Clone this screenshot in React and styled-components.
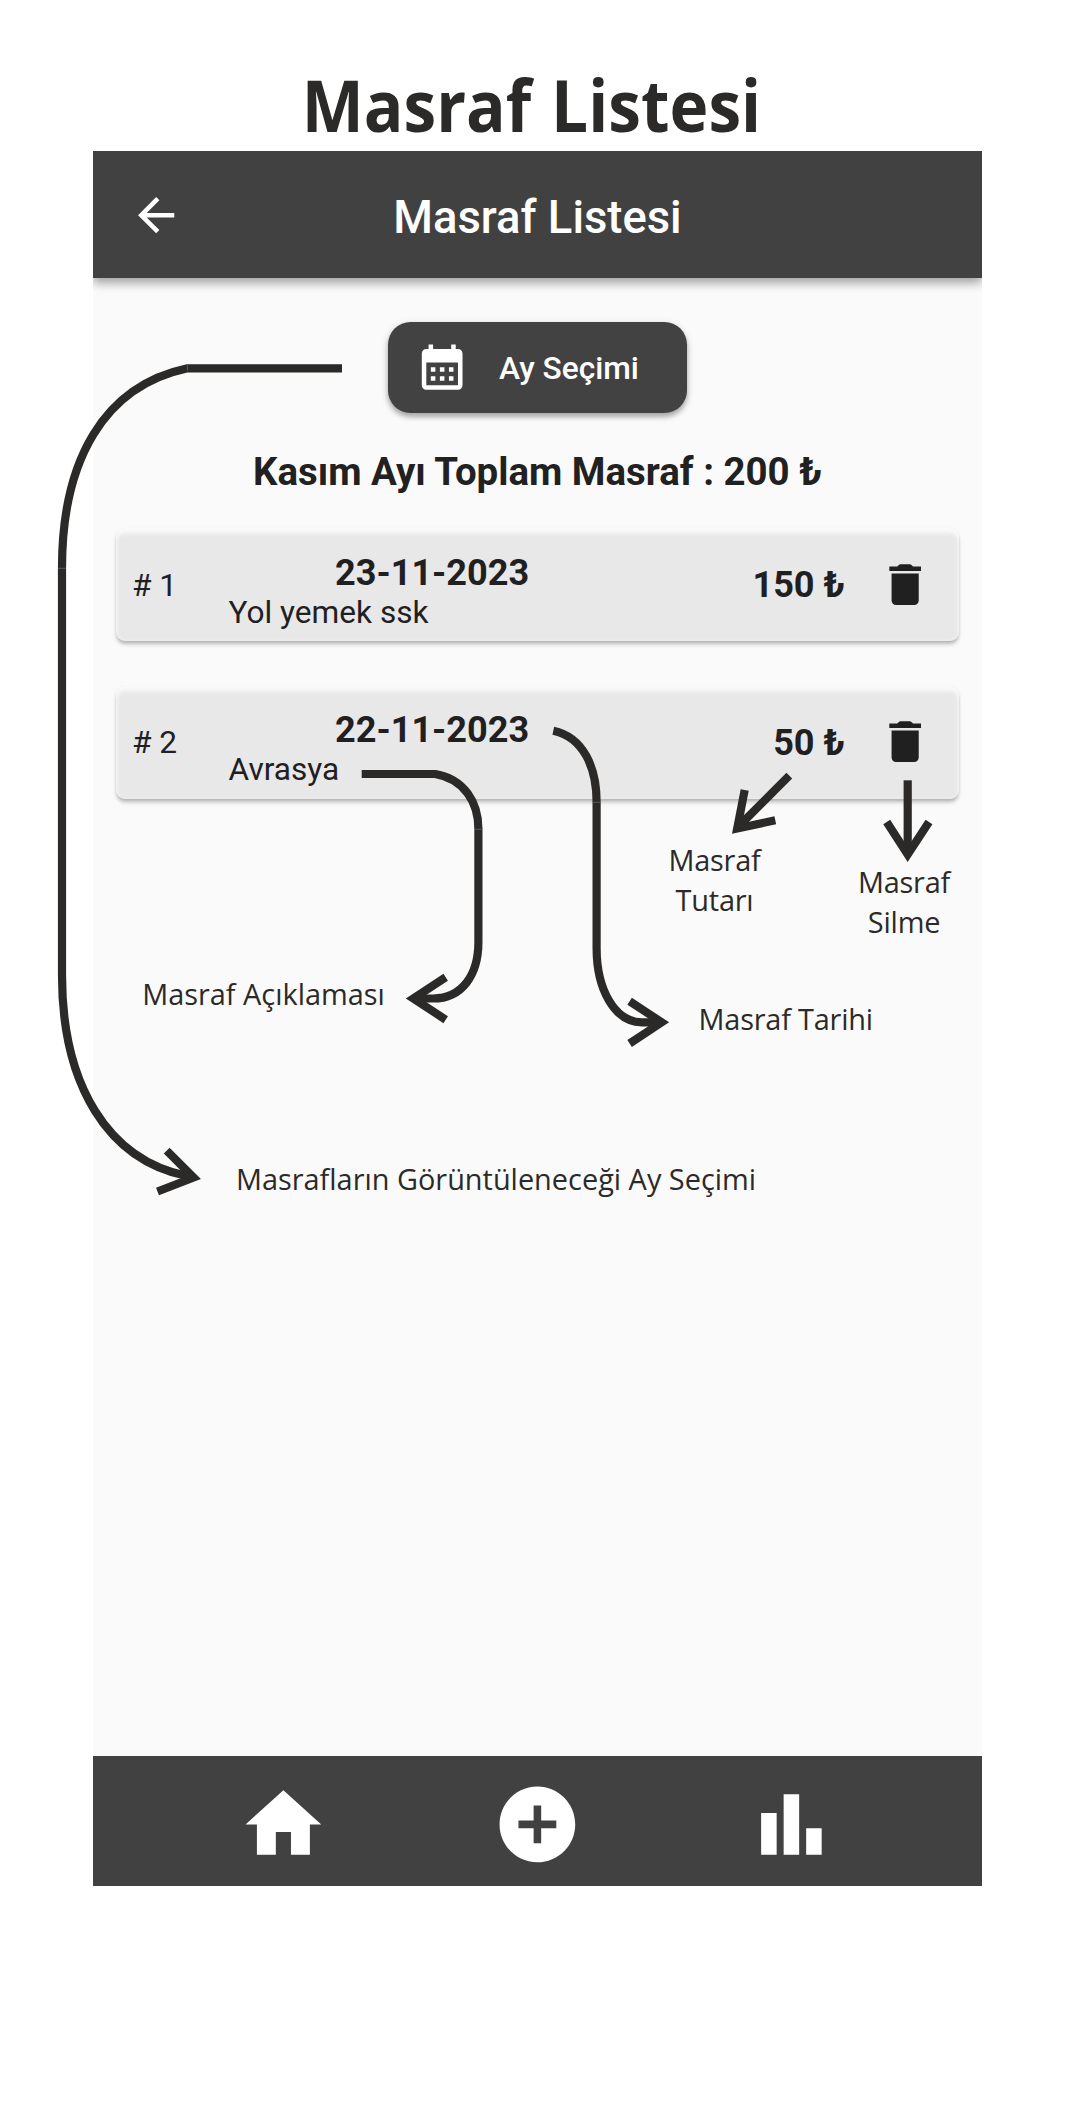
import React from "react";
import styled, { createGlobalStyle } from "styled-components";

const GlobalStyle = createGlobalStyle`
  *, *::before, *::after { box-sizing: border-box; }
  body { margin: 0; background: #fff; }
`;

const Page = styled.main`
  position: relative;
  width: 1081px;
  height: 2104px;
  padding: 57px 99px 0 93px;
  overflow: hidden;
  background: #fff;
  font-family: Roboto, "Liberation Sans", sans-serif;
`;

const PageTitle = styled.h1`
  width: 877px;
  margin: 0;
  height: 94px;
  line-height: 96px;
  text-align: center;
  white-space: nowrap;
  font-family: "Open Sans", "Noto Sans", sans-serif;
  font-weight: 700;
  font-size: 71px;
  word-spacing: 3px;
  color: #2b2a29;
  transform: scaleX(0.926);
`;

const Phone = styled.section`
  display: flex;
  flex-direction: column;
  height: 1734.7px;
  background: #fafafa;
`;

const AppBar = styled.header`
  display: grid;
  grid-template-columns: 127px 1fr 127px;
  align-items: center;
  flex: none;
  height: 127.4px;
  background: #414141;
  color: #fff;
  box-shadow: 0 5px 9px rgba(0, 0, 0, 0.3), 0 2px 14px rgba(0, 0, 0, 0.1);
  clip-path: inset(0 0 -30px 0);
`;

const BackButton = styled.button`
  display: grid;
  place-items: center;
  height: 100%;
  padding: 0;
  border: 0;
  background: none;
  color: inherit;
`;

const BarTitle = styled.h2`
  margin: 0;
  padding-top: 6px;
  text-align: center;
  font-weight: 500;
  font-size: 45.4px;
  line-height: 54px;
`;

const Body = styled.div`
  display: flex;
  flex-direction: column;
  align-items: center;
  flex: 1;
  padding: 44px 22.6px 0;
`;

const MonthButton = styled.button`
  display: flex;
  align-items: center;
  gap: 29.5px;
  flex: none;
  width: 298.4px;
  height: 90.4px;
  padding: 0 0 0 26.9px;
  border: 0;
  border-radius: 22.6px;
  background: #424242;
  color: #fff;
  font: 500 31.67px Roboto, sans-serif;
  box-shadow: 0 4px 5px rgba(0, 0, 0, 0.26), 0 2px 8px rgba(0, 0, 0, 0.14);
`;

const ButtonLabel = styled.span`
  padding-top: 1.6px;
`;

const Total = styled.p`
  margin: 36.5px 0 33px;
  font-weight: 700;
  font-size: 38.45px;
  line-height: 46px;
  color: #212121;
  white-space: nowrap;
`;

const ExpenseList = styled.ul`
  display: flex;
  flex-direction: column;
  gap: 45px;
  align-self: stretch;
  margin: 0;
  padding: 0;
  list-style: none;
`;

const ExpenseCard = styled.li`
  display: grid;
  grid-template-columns: 96.7px 406px 1fr 54.3px;
  align-items: center;
  height: 112.8px;
  padding: 0 27.2px 0 16.3px;
  border-radius: 9px;
  background: #e8e8e8;
  color: #1f201f;
  box-shadow:
    inset 0 6px 4px -1px #fafafa,
    inset 2px 0 4px -2px #f6f6f6,
    inset -2px 0 4px -2px #f6f6f6,
    0 4px 4px -1px rgba(0, 0, 0, 0.26),
    0 1px 3px rgba(0, 0, 0, 0.08);
`;

const Index = styled.span`
  padding-top: 2px;
  font-size: 31.67px;
  line-height: 38px;
`;

const Details = styled.div`
  display: flex;
  flex-direction: column;
  padding-top: 14px;
`;

const DateText = styled.strong`
  padding-left: 1px;
  text-align: center;
  font-weight: 700;
  font-size: 36.1px;
  line-height: 42px;
`;

const Description = styled.span`
  font-size: 31.6px;
  line-height: 38px;
`;

const Amount = styled.strong`
  padding-top: 0.8px;
  padding-right: 33px;
  text-align: right;
  font-weight: 700;
  font-size: 36.1px;
  line-height: 42px;
`;

const NavBar = styled.nav`
  display: flex;
  align-items: center;
  justify-content: space-evenly;
  flex: none;
  height: 129.7px;
  background: #414141;
  color: #fff;
`;

const NavItem = styled.button`
  display: grid;
  place-items: center;
  width: 127px;
  height: 127px;
  padding: 8px 0 0;
  border: 0;
  background: none;
  color: inherit;
`;

const Glyph = styled.svg`
  display: block;
  width: ${(p) => p.$size}px;
  height: ${(p) => p.$size}px;
  fill: currentColor;
`;

const Arrows = styled.svg`
  position: absolute;
  inset: 0;
  width: 1081px;
  height: 2104px;
  fill: none;
  stroke: #2b2a29;
  stroke-width: 8.2;
  stroke-miterlimit: 10;
  pointer-events: none;
`;

const Note = styled.p`
  position: absolute;
  left: ${(p) => p.$x}px;
  top: ${(p) => p.$y}px;
  width: ${(p) => p.$w}px;
  margin: 0;
  text-align: center;
  white-space: pre;
  font-family: "Open Sans", "Noto Sans", sans-serif;
  font-size: 28.9px;
  line-height: 40.4px;
  letter-spacing: ${(p) => p.$track || 0}px;
  color: #2b2a29;
`;

const ICONS = {
  back: "M20 11H7.83l5.59-5.59L12 4l-8 8 8 8 1.41-1.41L7.83 13H20v-2z",
  calendar:
    "M19 4h-1V2h-2v2H8V2H6v2H5c-1.11 0-1.99.9-1.99 2L3 20a2 2 0 0 0 2 2h14c1.1 0 2-.9 2-2V6c0-1.1-.9-2-2-2zm0 16H5V10h14v10zM9 14H7v-2h2v2zm4 0h-2v-2h2v2zm4 0h-2v-2h2v2zm-8 4H7v-2h2v2zm4 0h-2v-2h2v2zm4 0h-2v-2h2v2z",
  trash:
    "M6 18.800c0 1.100.9 2 2 2h8c1.100 0 2-.9 2-2V6.800H6v12zM19 3.800h-3.500l-.71-.71c-.18-.18-.44-.29-.7-.29H9.910c-.26 0-.52.11-.7.29L8.500 3.800H5v2h14v-2z",
  home: "M10 20v-6h4v6h5v-8h3L12 3 2 12h3v8z",
  add: "M12 2C6.480 2 2 6.480 2 12s4.480 10 10 10 10-4.480 10-10S17.520 2 12 2zm5 11h-4v4h-2v-4H7v-2h4V7h2v4h4v2z",
  chart: "M4 9h4.100v11H4zM15.900 13H20v7h-4.100zM9.950 4h4.100v16h-4.100z",
};

const Icon = ({ name, size }) => (
  <Glyph $size={size} viewBox="0 0 24 24" aria-hidden="true">
    <path d={ICONS[name]} />
  </Glyph>
);

const expenses = [
  { id: 1, date: "23-11-2023", text: "Yol yemek ssk", amount: 150 },
  { id: 2, date: "22-11-2023", text: "Avrasya", amount: 50 },
];

const notes = [
  { x: 654.5, y: 840, w: 120, text: "Masraf\nTutarı", track: -0.2 },
  { x: 844, y: 862, w: 120, text: "Masraf\nSilme", track: -0.2 },
  { x: 685.7, y: 999.4, w: 200, text: "Masraf Tarihi", track: -0.2 },
  { x: 123.5, y: 973.5, w: 280, text: "Masraf Açıklaması" },
  { x: 226, y: 1159.4, w: 540, text: "Masrafların Görüntüleneceği Ay Seçimi" },
];

const arrowPaths = [
  "M342 368.300H187.500C104 386 62 460 62 568V975C62 1085 108 1160 187 1176",
  "M166.700 1150.700L193.600 1177.500L157.500 1191.500",
  "M361.700 774H435.300C464 779 478.400 802 478.400 829V942C478.400 975 462 998.500 433 998.500H415",
  "M445.700 977.300L413.300 998.500L445.700 1019.700",
  "M553.300 730.700C583 737 596.600 767 596.600 802V948C596.600 990 615 1022.300 642 1022.300H660",
  "M629.600 1001.200L661.700 1022.300L629.600 1043.500",
  "M789.300 775.700L738 827",
  "M744.700 790L737.200 828.500L775.300 820.300",
  "M907.700 780.300V855",
  "M886.700 822L907.700 854.500L929 822",
];

export default function App() {
  return (
    <Page>
      <GlobalStyle />
      <PageTitle>Masraf Listesi</PageTitle>
      <Phone>
        <AppBar>
          <BackButton aria-label="Geri">
            <Icon name="back" size={54.3} />
          </BackButton>
          <BarTitle>Masraf Listesi</BarTitle>
        </AppBar>
        <Body>
          <MonthButton>
            <Icon name="calendar" size={54.3} />
            <ButtonLabel>Ay Seçimi</ButtonLabel>
          </MonthButton>
          <Total>Kasım Ayı Toplam Masraf : 200 ₺</Total>
          <ExpenseList>
            {expenses.map((e) => (
              <ExpenseCard key={e.id}>
                <Index># {e.id}</Index>
                <Details>
                  <DateText>{e.date}</DateText>
                  <Description>{e.text}</Description>
                </Details>
                <Amount>{e.amount} ₺</Amount>
                <Icon name="trash" size={54.3} />
              </ExpenseCard>
            ))}
          </ExpenseList>
        </Body>
        <NavBar>
          <NavItem aria-label="Ana sayfa">
            <Icon name="home" size={90.8} />
          </NavItem>
          <NavItem aria-label="Ekle">
            <Icon name="add" size={90.8} />
          </NavItem>
          <NavItem aria-label="Rapor">
            <Icon name="chart" size={90.8} />
          </NavItem>
        </NavBar>
      </Phone>
      <Arrows viewBox="0 0 1081 2104" aria-hidden="true">
        {arrowPaths.map((d) => (
          <path key={d} d={d} />
        ))}
        <path
          d="M58 568.300h8M474.300 829.300h8.200M592.500 802.300h8.200M187.500 364.500v6"
          stroke="#6d6c6b"
          strokeWidth="0.7"
        />
      </Arrows>
      {notes.map((n) => (
        <Note key={n.text} $x={n.x} $y={n.y} $w={n.w} $track={n.track}>
          {n.text}
        </Note>
      ))}
    </Page>
  );
}
